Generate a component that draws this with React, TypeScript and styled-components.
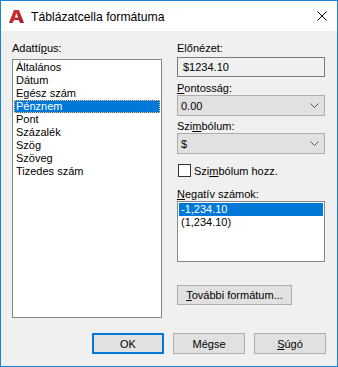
import React from 'react';
import styled, { createGlobalStyle } from 'styled-components';

const GlobalStyle = createGlobalStyle`
  html, body {
    margin: 0;
    padding: 0;
    background: #ffffff;
  }
  body {
    font-family: "Liberation Sans", Arial, sans-serif;
    font-size: 11px;
    color: #000000;
  }
`;

const Window = styled.div`
  width: 338px;
  height: 367px;
  box-sizing: border-box;
  border: 1px solid #1883d7;
  display: flex;
  flex-direction: column;
  overflow: hidden;
  background: #f0f0f0;
`;

const TitleBar = styled.div`
  height: 30px;
  background: #ffffff;
  display: flex;
  align-items: center;
  padding-left: 8px;
  padding-right: 10px;
  flex-shrink: 0;
`;

const TitleText = styled.span`
  margin-left: 7px;
  font-size: 12.2px;
  flex: 1;
  line-height: 14px;
  padding-top: 1px;
`;

const CloseIcon = styled.svg`
  width: 10px;
  height: 10px;
`;

const Body = styled.div`
  flex: 1;
  display: flex;
  flex-direction: column;
  padding: 11px 11px 0 11px;
`;

const Columns = styled.div`
  display: flex;
  gap: 15px;
`;

const Column = styled.div<{ $width: number }>`
  width: ${(p) => p.$width}px;
  display: flex;
  flex-direction: column;
`;

const Label = styled.div<{ $top?: number }>`
  line-height: 13px;
  height: 13px;
  margin-top: ${(p) => p.$top ?? 0}px;
  white-space: nowrap;
`;

const ListBox = styled.div<{ $height: number; $top: number }>`
  height: ${(p) => p.$height}px;
  margin-top: ${(p) => p.$top}px;
  box-sizing: border-box;
  border: 1px solid #828790;
  background: #ffffff;
  padding: 1px 1px;
  display: flex;
  flex-direction: column;
`;

const ListItem = styled.div<{ $selected?: boolean; $dotted?: boolean }>`
  height: 13px;
  line-height: 13px;
  padding-left: 2px;
  white-space: nowrap;
  box-sizing: border-box;
  background: ${(p) => (p.$selected ? '#0078d7' : 'transparent')};
  color: ${(p) => (p.$selected ? '#ffffff' : '#000000')};
  outline: ${(p) => (p.$dotted ? '1px dotted #f0c070' : 'none')};
  outline-offset: -1px;
`;

const Preview = styled.div`
  height: 20px;
  margin-top: 2px;
  box-sizing: border-box;
  border: 1px solid #7a7a7a;
  background: #f0f0f0;
  display: flex;
  align-items: center;
  padding-left: 5px;
`;

const Combo = styled.div`
  height: 21px;
  box-sizing: border-box;
  border: 1px solid #adadad;
  background: #e1e1e1;
  display: flex;
  align-items: center;
  justify-content: space-between;
  padding: 0 5px 0 3px;
`;

const Chevron = styled.svg`
  width: 9px;
  height: 5px;
`;

const CheckRow = styled.div`
  display: flex;
  align-items: center;
  height: 13px;
  margin-top: 10px;
  padding-left: 1px;
`;

const CheckBox = styled.span`
  width: 13px;
  height: 13px;
  box-sizing: border-box;
  border: 1px solid #333333;
  background: #ffffff;
  margin-right: 3px;
`;

const Button = styled.div<{ $default?: boolean; $width: number }>`
  width: ${(p) => p.$width}px;
  height: 21px;
  box-sizing: border-box;
  border: ${(p) => (p.$default ? '2px solid #0078d7' : '1px solid #adadad')};
  background: #e1e1e1;
  display: flex;
  align-items: center;
  justify-content: center;
  white-space: nowrap;
`;

const MoreButton = styled(Button)`
  margin-top: 23px;
  height: 20px;
`;

const ButtonRow = styled.div`
  display: flex;
  justify-content: flex-end;
  gap: 9px;
  margin-top: 15px;
`;

const U = styled.span`
  text-decoration: underline;
`;

const AppIcon: React.FC = () => (
  <svg width="15" height="15" viewBox="0 0 15 15">
    <defs>
      <linearGradient id="ag" x1="0" y1="0" x2="1" y2="1">
        <stop offset="0" stopColor="#e04040" />
        <stop offset="1" stopColor="#a01820" />
      </linearGradient>
    </defs>
    <polygon points="5,1 10,1 15,14 11,14 9.8,11 5,11 3.6,14 0,14" fill="url(#ag)" />
    <polygon points="7.4,4.2 9.1,8.6 5.9,8.6" fill="#ffffff" />
    <polygon points="5,1 7,1 2.5,14 0,14" fill="#c82630" opacity="0.6" />
  </svg>
);

const types = ['Általános', 'Dátum', 'Egész szám', 'Pénznem', 'Pont', 'Százalék', 'Szög', 'Szöveg', 'Tizedes szám'];

const App: React.FC = () => (
  <>
    <GlobalStyle />
    <Window>
      <TitleBar>
        <AppIcon />
        <TitleText>Táblázatcella formátuma</TitleText>
        <CloseIcon viewBox="0 0 10 10">
          <path d="M0.5 0.5 L9.5 9.5 M9.5 0.5 L0.5 9.5" stroke="#000" strokeWidth="1" fill="none" />
        </CloseIcon>
      </TitleBar>
      <Body>
        <Columns>
          <Column $width={150}>
            <Label>Adattí<U>p</U>us:</Label>
            <ListBox $height={259} $top={4}>
              {types.map((t) => (
                <ListItem key={t} $selected={t === 'Pénznem'} $dotted={t === 'Pénznem'}>
                  {t}
                </ListItem>
              ))}
            </ListBox>
          </Column>
          <Column $width={148}>
            <Label>Előnézet:</Label>
            <Preview>$1234.10</Preview>
            <Label $top={5}><U>P</U>ontosság:</Label>
            <Combo>
              <span>0.00</span>
              <Chevron viewBox="0 0 9 5">
                <path d="M0.5 0.5 L4.5 4.5 L8.5 0.5" stroke="#555" strokeWidth="1" fill="none" />
              </Chevron>
            </Combo>
            <Label $top={4}>Szi<U>m</U>bólum:</Label>
            <Combo>
              <span>$</span>
              <Chevron viewBox="0 0 9 5">
                <path d="M0.5 0.5 L4.5 4.5 L8.5 0.5" stroke="#555" strokeWidth="1" fill="none" />
              </Chevron>
            </Combo>
            <CheckRow>
              <CheckBox />
              <span>Szi<U>m</U>bólum hozz.</span>
            </CheckRow>
            <Label $top={11}><U>N</U>egatív számok:</Label>
            <ListBox $height={61} $top={0}>
              <ListItem $selected>-1,234.10</ListItem>
              <ListItem>(1,234.10)</ListItem>
            </ListBox>
            <MoreButton $width={115}>
              <span><U>T</U>ovábbi formátum...</span>
            </MoreButton>
          </Column>
        </Columns>
        <ButtonRow>
          <Button $default $width={72}>OK</Button>
          <Button $width={72}>Mégse</Button>
          <Button $width={72}><U>S</U>úgó</Button>
        </ButtonRow>
      </Body>
    </Window>
  </>
);

export default App;
